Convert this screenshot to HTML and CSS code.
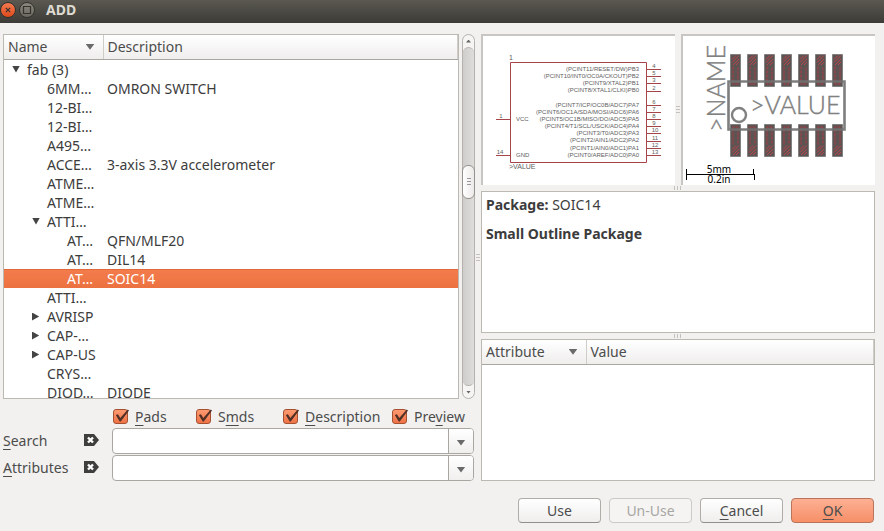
FILE: index.html
```html
<!DOCTYPE html>
<html lang="en">
<head>
<meta charset="utf-8">
<title>ADD</title>
<link rel="stylesheet" href="styles.css">
</head>
<body>
<div class="window">
  <header class="titlebar">
    <button class="wm wm-close" aria-label="Close"><svg viewBox="0 0 16 16"><path d="M5.5 5.5l5 5m0-5l-5 5"/></svg></button>
    <button class="wm" aria-label="Maximize"><svg viewBox="0 0 16 16"><path d="M4 4h8v8H4z"/></svg></button>
    <h1>ADD</h1>
  </header>

  <main class="content">
    <section class="library">
      <div class="tree-area">
        <div class="frame tree">
          <table>
            <colgroup><col class="col-name"><col></colgroup>
            <thead><tr><th><span class="sort">Name<i class="tri"></i></span></th><th>Description</th></tr></thead>
            <tbody>
              <tr><td class="l1"><i class="tri open"></i>fab (3)</td><td></td></tr>
              <tr><td class="l2">6MM…</td><td>OMRON SWITCH</td></tr>
              <tr><td class="l2">12-BI…</td><td></td></tr>
              <tr><td class="l2">12-BI…</td><td></td></tr>
              <tr><td class="l2">A495…</td><td></td></tr>
              <tr><td class="l2">ACCE…</td><td>3-axis 3.3V accelerometer</td></tr>
              <tr><td class="l2">ATME…</td><td></td></tr>
              <tr><td class="l2">ATME…</td><td></td></tr>
              <tr><td class="l2"><i class="tri open"></i>ATTI…</td><td></td></tr>
              <tr><td class="l3">AT…</td><td>QFN/MLF20</td></tr>
              <tr><td class="l3">AT…</td><td>DIL14</td></tr>
              <tr class="selected"><td class="l3">AT…</td><td>SOIC14</td></tr>
              <tr><td class="l2">ATTI…</td><td></td></tr>
              <tr><td class="l2"><i class="tri closed"></i>AVRISP</td><td></td></tr>
              <tr><td class="l2"><i class="tri closed"></i>CAP-…</td><td></td></tr>
              <tr><td class="l2"><i class="tri closed"></i>CAP-US</td><td></td></tr>
              <tr><td class="l2">CRYS…</td><td></td></tr>
              <tr><td class="l2">DIOD…</td><td>DIODE</td></tr>
            </tbody>
          </table>
        </div>
        <div class="scrollbar">
          <button class="step" aria-label="Scroll up"><i class="up"></i></button>
          <div class="trough"><div class="before"></div><div class="thumb"><i class="lines"></i></div><div class="after"></div></div>
          <button class="step" aria-label="Scroll down"><i class="down"></i></button>
        </div>
      </div>

      <div class="checks">
        <label><input type="checkbox" checked><span><u>P</u>ads</span></label>
        <label><input type="checkbox" checked><span>S<u>m</u>ds</span></label>
        <label><input type="checkbox" checked><span><u>D</u>escription</span></label>
        <label><input type="checkbox" checked><span>Pre<u>v</u>iew</span></label>
      </div>

      <div class="filters">
        <label for="search"><u>S</u>earch</label>
        <button class="clear" aria-label="Clear search"><svg viewBox="0 0 16 12"><path class="tag" d="M1 0h10l5 6-5 6H1z"/><path class="x" d="M5 3.5l5 5m0-5l-5 5"/></svg></button>
        <div class="combo"><input id="search" type="text"><button aria-label="Search history"><i class="tri"></i></button></div>
        <label for="attributes"><u>A</u>ttributes</label>
        <button class="clear" aria-label="Clear attributes"><svg viewBox="0 0 16 12"><path class="tag" d="M1 0h10l5 6-5 6H1z"/><path class="x" d="M5 3.5l5 5m0-5l-5 5"/></svg></button>
        <div class="combo"><input id="attributes" type="text"><button aria-label="Attribute history"><i class="tri"></i></button></div>
      </div>
    </section>

    <div class="splitter"><i class="lines"></i></div>

    <section class="details">
      <div class="previews">
        <div class="preview">
          <svg class="symbol" viewBox="0 0 192 149">
            <path class="wire" d="M27.5 26.5h136v100h-136zM13 83.5h14M13 119.5h14M164 33.5h14M164 40.5h14M164 47.5h14M164 55.5h14M164 69.5h14M164 76.5h14M164 83.5h14M164 90.5h14M164 97.5h14M164 105.5h14M164 112.5h14M164 119.5h14"/>
            <g class="pin-names">
              <text x="156" y="35">(PCINT11/RESET/DW)PB3</text>
              <text x="156" y="42">(PCINT10/INT0/OC0A/CKOUT)PB2</text>
              <text x="156" y="49">(PCINT9/XTAL2)PB1</text>
              <text x="156" y="56">(PCINT8/XTAL1/CLKI)PB0</text>
              <text x="156" y="71">(PCINT7/ICP/OC0B/ADC7)PA7</text>
              <text x="156" y="78">(PCINT6/OC1A/SDA/MOSI/ADC6)PA6</text>
              <text x="156" y="85">(PCINT5/OC1B/MISO/DO/ADC5)PA5</text>
              <text x="156" y="92">(PCINT4/T1/SCL/USCK/ADC4)PA4</text>
              <text x="156" y="99">(PCINT3/T0/ADC3)PA3</text>
              <text x="156" y="106">(PCINT2/AIN1/ADC2)PA2</text>
              <text x="156" y="114">(PCINT1/AIN0/ADC1)PA1</text>
              <text x="156" y="121">(PCINT0/AREF/ADC0)PA0</text>
            </g>
            <g class="pin-numbers">
              <text x="171" y="32">4</text><text x="171" y="39">5</text><text x="171" y="46">3</text><text x="171" y="54">2</text>
              <text x="171" y="68">6</text><text x="171" y="75">7</text><text x="171" y="82">8</text><text x="171" y="89">9</text>
              <text x="172" y="96">10</text><text x="172" y="104">11</text><text x="172" y="111">12</text><text x="172" y="118">13</text>
              <text x="18" y="82">1</text><text x="17" y="118">14</text>
            </g>
            <g class="labels">
              <text x="33" y="85">VCC</text><text x="33" y="121">GND</text>
              <text class="part" x="26" y="24">1</text><text class="part" x="26" y="133">&gt;VALUE</text>
            </g>
          </svg>
        </div>
        <div class="splitter"><i class="lines"></i></div>
        <div class="preview">
          <svg class="footprint" viewBox="0 0 192 149">
            <defs>
              <g id="pad">
                <path d="M0 0h10v32H0z" fill="#5e5353" stroke="#808080"/>
                <path d="M1.500 5l4-4M1.500 8l7-7M2.500 10.500l6-6M5.500 10.500l3-3" stroke="#bb444a"/>
                <path d="M2.500 12v17.500h5V12" fill="none" stroke="#a83e44" stroke-dasharray="3 1"/>
              </g>
              <g id="pad-low">
                <path d="M0 0h10v32H0z" fill="#5e5353" stroke="#808080"/>
                <path d="M1.500 25l4-4M1.500 28l7-7M2.500 30.500l6-6M5.500 30.500l3-3" stroke="#bb444a"/>
                <path d="M2.500 20V2.500h5V20" fill="none" stroke="#a83e44" stroke-dasharray="3 1"/>
              </g>
            </defs>
            <g>
              <use href="#pad" x="47.500" y="18.500"/><use href="#pad" x="64.500" y="18.500"/><use href="#pad" x="81.500" y="18.500"/><use href="#pad" x="98.500" y="18.500"/><use href="#pad" x="115.500" y="18.500"/><use href="#pad" x="132.500" y="18.500"/><use href="#pad" x="149.500" y="18.500"/>
              <use href="#pad-low" x="47.500" y="88.500"/><use href="#pad-low" x="64.500" y="88.500"/><use href="#pad-low" x="81.500" y="88.500"/><use href="#pad-low" x="98.500" y="88.500"/><use href="#pad-low" x="115.500" y="88.500"/><use href="#pad-low" x="132.500" y="88.500"/><use href="#pad-low" x="149.500" y="88.500"/>
            </g>
            <path class="body" d="M45.500 45.500h116v48h-116z"/>
            <circle class="mark" cx="56" cy="79" r="7"/>
            <text class="big" x="67" y="78">&gt;VALUE</text>
            <text class="big" transform="translate(42 96) rotate(-90)">&gt;NAME</text>
            <path class="scale" d="M3.500 133v11M3.500 138.500h68M70.500 133v5M71.500 138v6"/>
            <g class="scale-text"><text x="36" y="137">5mm</text><text x="36" y="147">0.2in</text></g>
          </svg>
        </div>
      </div>
      <div class="splitter row"><i class="lines"></i></div>
      <div class="frame package">
        <p><b>Package:</b> SOIC14</p>
        <p><b>Small Outline Package</b></p>
      </div>
      <div class="splitter row"><i class="lines"></i></div>
      <div class="frame attributes">
        <table>
          <colgroup><col class="col-attribute"><col></colgroup>
          <thead><tr><th><span class="sort">Attribute<i class="tri"></i></span></th><th>Value</th></tr></thead>
        </table>
      </div>
    </section>
  </main>

  <footer class="actions">
    <button>Use</button>
    <button disabled>Un-Use</button>
    <button><u>C</u>ancel</button>
    <button class="primary"><u>O</u>K</button>
  </footer>
</div>
</body>
</html>
```
FILE: styles.css
```css
* { box-sizing: border-box; }
body {
  margin: 0;
  background: #f2f1f0;
  color: #4c4c4c;
  font: 14px/19px "Noto Sans", "Open Sans", sans-serif;
}
button, input { font: inherit; color: inherit; margin: 0; padding: 0; }
button { border: 0; background: none; }
u { text-decoration: underline; text-decoration-thickness: 1px; text-underline-offset: 3px; text-decoration-skip-ink: none; }
.window { height: 100vh; display: flex; flex-direction: column; }

.titlebar {
  flex: none;
  height: 23px;
  display: flex;
  align-items: center;
  gap: 3px;
  padding-bottom: 4px;
  background: linear-gradient(#5a5850, #3c3b37);
  color: #dfdbd2;
}
.titlebar h1 { margin: 0 0 0 8px; font-size: 14px; line-height: 19px; }
.wm { width: 16px; height: 16px; border: 1px solid #32312d; border-radius: 50%; background: linear-gradient(#8a887f, #6a685f); }
.wm-close { background: linear-gradient(#f57a50, #df4a1c); }
.wm svg { display: block; width: 14px; height: 14px; fill: none; stroke: #35332e; stroke-width: 1.4; }

.content {
  flex: 1;
  min-height: 0;
  display: grid;
  grid-template-columns: minmax(0, 472fr) 6px minmax(0, 394fr);
  padding: 11px 9px 0 3px;
}
.library { display: flex; flex-direction: column; min-height: 0; }
.tree-area { flex: 1; min-height: 0; display: flex; gap: 3px; }
.frame { background: #fff; border: 1px solid #bcb8b2; overflow: hidden; }
.tree { flex: 1; }

table { width: 100%; border-collapse: collapse; table-layout: fixed; }
.col-name { width: 99px; }
.col-attribute { width: 104px; }
th {
  height: 24px;
  padding: 0 4px;
  font-weight: normal;
  text-align: left;
  background: linear-gradient(#fff, #efeeed);
  border-bottom: 1px solid #aaa7a3;
}
th:first-child { border-right: 1px solid #d0cdc9; }
th:last-child { box-shadow: inset -1px 0 #d0cdc9; }
.sort { display: flex; align-items: center; justify-content: space-between; padding-right: 4px; }
td { height: 19px; padding: 0 0 0 4px; line-height: 19px; color: #3c3c3c; white-space: nowrap; }
.l1 { padding-left: 8px; }
.l2 { padding-left: 43px; }
.l3 { padding-left: 63px; }
.l2:has(.tri) { padding-left: 28px; }
.tri { display: inline-block; width: 9px; height: 6px; background: #6a6a6a; clip-path: polygon(0 0, 100% 0, 50% 100%); }
td .tri { width: 8px; height: 7px; margin-right: 7px; vertical-align: 2px; background: #444; }
td .closed { height: 8px; vertical-align: 1px; clip-path: polygon(0 0, 90% 50%, 0 100%); }
.selected { background: linear-gradient(#f47d4d, #ec7140); box-shadow: inset 0 1px #e06a3c; }
.selected td { color: #fff; }

.scrollbar {
  width: 13px;
  display: flex;
  flex-direction: column;
  border: 1px solid #b5b2ae;
  border-radius: 7px;
  background: #f6f5f4;
}
.step { height: 12px; display: grid; place-items: center; }
.up, .down { width: 5px; height: 3px; background: #666; clip-path: polygon(50% 0, 100% 100%, 0 100%); }
.down { clip-path: polygon(0 0, 100% 0, 50% 100%); }
.trough { flex: 1; display: flex; flex-direction: column; border: solid #b5b2ae; border-width: 1px 0; border-radius: 6px; background: linear-gradient(90deg, #cfcdcb, #dfdddc); }
.before { flex: 117; }
.after { flex: 186; }
.thumb { height: 34px; margin: 0 -1px; border: 1px solid #96938f; border-radius: 6px; background: linear-gradient(90deg, #fff, #eceae8); display: grid; place-items: center; }
.lines { display: block; width: 4px; height: 8px; background: repeating-linear-gradient(#c4c1bd 0 1px, transparent 1px 3px); }
.thumb .lines { background: repeating-linear-gradient(#999 0 1px, transparent 1px 3px); }
.splitter { display: grid; place-items: center; }
.splitter.row .lines { width: 8px; height: 4px; background: repeating-linear-gradient(90deg, #c4c1bd 0 1px, transparent 1px 3px); }

.checks { display: grid; grid-template-columns: 83px 87px 109px auto; padding: 8px 0 2px 110px; }
.checks label { display: flex; align-items: center; gap: 7px; }
.checks input {
  appearance: none;
  position: relative;
  width: 15px;
  height: 15px;
  border: 1px solid #a5502f;
  border-radius: 3px;
  background: linear-gradient(#ff9a70, #ee7246);
}
.checks input:checked::after {
  content: "";
  position: absolute;
  inset: -1px -2px 0 0;
  background: #513026;
  clip-path: polygon(12% 42%, 26% 38%, 42% 64%, 92% 4%, 100% 10%, 45% 90%, 38% 90%);
}
.filters { display: grid; grid-template-columns: 80px 16px 1fr; row-gap: 1px; align-items: center; padding-right: 1px; }
.filters label { padding-bottom: 2px; }
.combo { display: flex; height: 26px; margin-left: 13px; border: 1px solid #aaa7a3; border-radius: 4px; background: #fff; overflow: hidden; }
.combo input { flex: 1; min-width: 0; border: 0; padding: 0 5px; background: none; outline: none; }
.combo button { width: 25px; padding-top: 3px; border-left: 1px solid #aaa7a3; background: linear-gradient(#fff, #f0efee); display: grid; place-items: center; }
.clear { height: 14px; padding-bottom: 2px; }
.clear svg { display: block; width: 16px; height: 12px; }
.tag { fill: #3e3f3c; }
.x { stroke: #fff; stroke-width: 2.4; }

.details { display: grid; grid-template-rows: minmax(0, 151fr) 6px minmax(0, 142fr) 6px minmax(0, 142fr); min-height: 0; }
.previews { display: grid; grid-template-columns: minmax(0, 1fr) 6px minmax(0, 1fr); min-height: 0; }
.preview { min-height: 0; background: #fff; border: solid #c8c5c2; border-width: 2px 0 0 2px; overflow: hidden; }
.preview svg { display: block; width: 100%; height: 100%; }
.preview text { font-family: "Liberation Sans", sans-serif; fill: #606060; }
.wire { fill: none; stroke: #a54549; stroke-width: 1; }
.pin-names text { font-size: 6px; text-anchor: end; }
.pin-numbers text { font-size: 6px; text-anchor: middle; }
.labels text { font-size: 6px; }
.labels .part { font-size: 7px; }
.body { fill: none; stroke: #707070; stroke-width: 2.6; stroke-opacity: .9; }
.mark { fill: none; stroke: #808080; stroke-width: 2.4; }
.preview .big { font-family: Lato, sans-serif; font-weight: 300; font-size: 25px; fill: #808080; stroke: #808080; stroke-width: .4; }
.scale { fill: none; stroke: #000; }
.preview .scale-text text { font-family: "Noto Sans", sans-serif; font-size: 10px; text-anchor: middle; fill: #000; }
.package { padding: 3px 4px; color: #3c3c3c; }
.package p { margin: 0 0 10px; }

.actions { flex: none; display: flex; justify-content: flex-end; gap: 8px; padding: 17px 10px 8px; }
.actions button {
  width: 83px;
  height: 25px;
  border: 1px solid #b0ada9;
  border-bottom-color: #928f8b;
  border-radius: 4px;
  background: linear-gradient(#fff, #efeeed);
}
.actions button:disabled { color: #a8a6a3; border-color: #ccc9c6; background: #f5f4f3; }
.actions .primary { border-color: #b9745a; background: linear-gradient(#fdb093, #f68f68); }
```
